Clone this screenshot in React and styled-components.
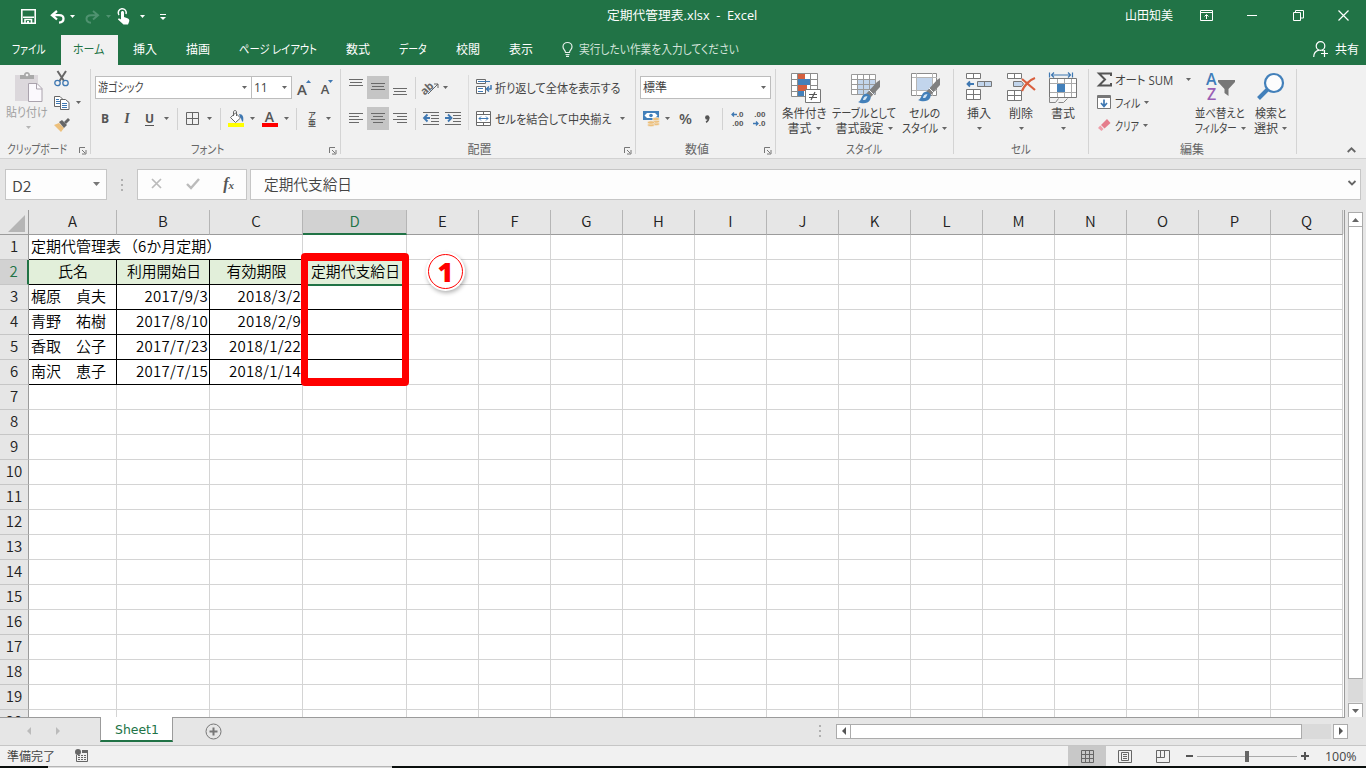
import { useLayoutEffect, useRef } from 'react';
import styled, { createGlobalStyle } from 'styled-components';

const COLUMNS = [
  { name: 'A', width: 88 },
  { name: 'B', width: 93 },
  { name: 'C', width: 93 },
  { name: 'D', width: 104 },
  ...'EFGHIJKLMNOPQ'.split('').map((name) => ({ name, width: 72 })),
];

const TEMPLATE = `29px ${COLUMNS.map((c) => `${c.width}px`).join(' ')} 1px`;

const HEADERS = [
  { text: '氏名', w: 30 },
  { text: '利用開始日', w: 74 },
  { text: '有効期限', w: 60 },
  { text: '定期代支給日', w: 89 },
];

const PEOPLE = [
  ['梶原　貞夫', '2017/9/3', '2018/3/2'],
  ['青野　祐樹', '2017/8/10', '2018/2/9'],
  ['香取　公子', '2017/7/23', '2018/1/22'],
  ['南沢　恵子', '2017/7/15', '2018/1/14'],
];

const TABS = [
  { text: 'ファイル', w: 34, ml: 12 },
  { text: 'ホーム', w: 31, ml: 15, active: true },
  { text: '挿入', w: 24, ml: 15 },
  { text: '描画', w: 24, ml: 29 },
  { text: 'ページ レイアウト', w: 78, ml: 29 },
  { text: '数式', w: 24, ml: 29 },
  { text: 'データ', w: 28, ml: 29 },
  { text: '校閲', w: 24, ml: 29 },
  { text: '表示', w: 24, ml: 29 },
];

// Squeezes a label to the width of its slot, like the condensed UI kana
function Fit({ w, children }) {
  const ref = useRef(null);

  useLayoutEffect(() => {
    const el = ref.current;
    el.style.transform = `scaleX(${w / el.offsetWidth})`;
  }, [w, children]);

  return (
    <FitBox $w={w}>
      <FitText ref={ref}>{children}</FitText>
    </FitBox>
  );
}

function Icon({ w, h, children, ...rest }) {
  return (
    <Svg width={w} height={h} viewBox={`0 0 ${w} ${h}`} fill="none" {...rest}>
      {children}
    </Svg>
  );
}

function Caret({ color = '#666' }) {
  return (
    <Icon w={5} h={3}>
      <path d="M0 0h5L2.5 3z" fill={color} />
    </Icon>
  );
}

function Lines({ rows }) {
  return (
    <Icon w={14} h={19} shapeRendering="crispEdges">
      {rows.map(([x, y, w]) => (
        <path key={y} d={`M${x} ${y + 0.5}h${w}`} stroke="#6a6a6a" />
      ))}
    </Icon>
  );
}

function Launcher() {
  return (
    <LauncherBox>
      <Icon w={8} h={8}>
        <path d="M.5 6V.5H6M3 3l3 3M7 3v4H3" stroke="#777" />
      </Icon>
    </LauncherBox>
  );
}

function Group({ width, label, labelWidth, launcher, children }) {
  return (
    <GroupBox $w={width}>
      <GroupBody>{children}</GroupBody>
      <GroupLabel $launcher={launcher}>
        <Fit w={labelWidth}>{label}</Fit>
        {launcher && <Launcher />}
      </GroupLabel>
    </GroupBox>
  );
}

function BigButton({ width, icon, first, second }) {
  return (
    <Big $w={width}>
      <BigIcon>{icon}</BigIcon>
      <BigLine><Fit w={first.w}>{first.text}</Fit></BigLine>
      <BigLine>
        {second && <Fit w={second.w}>{second.text}</Fit>}
        <Caret />
      </BigLine>
    </Big>
  );
}

function Brush({ x, y }) {
  return (
    <g transform={`translate(${x} ${y})`}>
      <path d="M21-1v7L11 17l-4-4L18 1z" fill="#808080" />
      <path d="M10 9l5 5" stroke="#f1f1f1" />
      <path d="M-1 21c4-1 3-7 7-8s7 3 5 6c-2 4-8 4-12 2z" fill="#4380ba" />
      <path d="M4 19c0-2 2-4.500 4.500-3.500-1 1-1 4-4.500 3.500z" fill="#d5e5f4" />
    </g>
  );
}

function TitleBar() {
  return (
    <Title>
      <Save>
        <Icon w={15} h={15}>
          <path d="M.8.8h13.4v13.4H.8z" stroke="#fff" strokeWidth="1.6" />
          <path d="M2 8.2h11M4 14v-3.5h6.5V14" stroke="#fff" strokeWidth="1.6" />
          <path d="M6 12h2v2H6z" fill="#fff" />
        </Icon>
      </Save>
      <Icon w={15} h={14}>
        <path d="M7 1L2 5.2 7 9.5M2.5 5.2H9c6 0 6 7 0 7.5" stroke="#fff" strokeWidth="2.3" />
      </Icon>
      <Slot $w={15}><Caret color="#fff" /></Slot>
      <Slot $w={24}>
        <Icon w={15} h={14}>
          <path d="M8 1l5 4.2L8 9.5M12.5 5.2H6c-6 0-6 7 0 7.5" stroke="#4f9270" strokeWidth="2" />
        </Icon>
      </Slot>
      <Slot $w={9}><Caret color="#4f9270" /></Slot>
      <Slot $w={22}>
        <Icon w={14} h={17}>
          <path d="M2 7a4 4 0 1 1 7-1" stroke="#fff" strokeWidth="1.5" />
          <path d="M4 4.5c0-2 3-2 3 0V9l4 1.5c1.5.7 1.5 2 1 3.5L11 16.5H6.5L1 11.5c0-1.2 1.5-1.5 3 0z" fill="#fff" />
        </Icon>
      </Slot>
      <Slot $w={14}><Caret color="#fff" /></Slot>
      <Slot $w={28}>
        <Icon w={6} h={6}>
          <path d="M0 .5h6" stroke="#fff" />
          <path d="M0 3h6L3 6z" fill="#fff" />
        </Icon>
      </Slot>
      <FileName><Fit w={150}>定期代管理表.xlsx&nbsp; - &nbsp;Excel</Fit></FileName>
      <UserName><Fit w={48}>山田知美</Fit></UserName>
      <WindowButton $w={46}>
        <Icon w={13} h={11}>
          <path d="M.5.5h12v10H.5zM.5 2.5h12M6.5 9V5M4.500 6.500l2-2 2 2" stroke="#fff" />
        </Icon>
      </WindowButton>
      <WindowButton $w={46}>
        <Icon w={11} h={11}><path d="M0 5.5h10" stroke="#fff" /></Icon>
      </WindowButton>
      <WindowButton $w={46}>
        <Icon w={11} h={11}>
          <path d="M.5 2.5h7v8h-7zM2.5 2V.5h8v7.5H8" stroke="#fff" />
        </Icon>
      </WindowButton>
      <WindowButton $w={46}>
        <Icon w={11} h={11}><path d="M.5.5l10 10M10.5.5l-10 10" stroke="#fff" strokeWidth="1.2" /></Icon>
      </WindowButton>
    </Title>
  );
}

function TabBar() {
  return (
    <Tabs>
      {TABS.map((tab) => (
        <Tab key={tab.text} $ml={tab.ml} $active={tab.active}>
          <Fit w={tab.w}>{tab.text}</Fit>
        </Tab>
      ))}
      <TellMe>
        <Icon w={11} h={15}>
          <path d="M3.5 10.5C3.5 8 1 7.5 1 4.8a4.5 4.3 0 0 1 9 0c0 2.7-2.5 3.2-2.5 5.7zM3.5 12.5h4M4 14.3h3" stroke="#e6f0ea" strokeWidth="1.2" />
        </Icon>
        <Fit w={160}>実行したい作業を入力してください</Fit>
      </TellMe>
      <Share>
        <Icon w={16} h={16}>
          <circle cx="7.5" cy="5" r="4.3" stroke="#fff" strokeWidth="1.2" />
          <path d="M.7 16c0-3 2-6 5.3-6.800M9 9l1.5 1M8 12.5h7M11.5 9v7" stroke="#fff" strokeWidth="1.2" />
        </Icon>
        <Fit w={24}>共有</Fit>
      </Share>
    </Tabs>
  );
}

function ClipboardGroup() {
  return (
    <Group width={91} label="クリップボード" labelWidth={60} launcher>
      <PasteButton>
        <Icon w={29} h={32}>
          <path d="M1 3h23v26H1z" fill="#dcd8dc" />
          <path d="M6 3h4c0-4 6-4 6 0h4v4H6z" fill="#a9a9a9" />
          <circle cx="13" cy="3" r="1.3" fill="#f1f1f1" />
          <path d="M14.5 11.5h8.500l5 5v13H14.5z" fill="#fbf9fd" stroke="#aaa3ad" />
          <path d="M22.5 11.5V17H28" stroke="#aaa3ad" />
        </Icon>
        <PasteLabel><Fit w={42}>貼り付け</Fit></PasteLabel>
        <Caret color="#b5b5b5" />
      </PasteButton>
      <ClipTools>
        <Icon w={15} h={16}>
          <path d="M3.500 0l6.500 10M12 0L5.500 10" stroke="#666" strokeWidth="2" />
          <circle cx="3.5" cy="12" r="2.7" stroke="#3f78b2" strokeWidth="1.3" />
          <circle cx="11.5" cy="12" r="2.7" stroke="#3f78b2" strokeWidth="1.3" />
        </Icon>
        <CopyRow>
          <Icon w={16} h={14}>
            <path d="M.5.5H6l2.5 2.5v7.5h-8z" fill="#fff" stroke="#666" />
            <path d="M2 3.5h3M2 5.5h4M2 7.5h4" stroke="#3f78b2" />
            <path d="M6.5 3.5h5l3.5 3v7H6.5z" fill="#fff" stroke="#666" />
            <path d="M8 7.5h5M8 9.5h5M8 11.5h5" stroke="#3f78b2" />
          </Icon>
          <Caret />
        </CopyRow>
        <Icon w={17} h={14}>
          <path d="M0 7l5-2 5 5-3 4z" fill="#edc07c" />
          <path d="M5 4l3-2 5 5-3 3z" fill="#666" />
          <path d="M10 4l4-4 2 2-4 4z" fill="#666" />
        </Icon>
      </ClipTools>
    </Group>
  );
}

function FontGroup() {
  return (
    <Group width={250} label="フォント" labelWidth={33} launcher>
      <Stack $pl={4}>
        <Row>
          <Combo $w={157}><Fit w={46}>游ゴシック</Fit><Caret /></Combo>
          <Combo $w={41} $joined><Fit w={14}>11</Fit><Caret /></Combo>
          <Slot $w={24}>
            <Grow $size={15} $top={3}>A</Grow>
            <Icon w={5} h={3}><path d="M0 3h5L2.5 0z" fill="#3f78b2" /></Icon>
          </Slot>
          <Slot $w={22}>
            <Grow $size={13} $top={4}>A</Grow>
            <Icon w={5} h={3}><path d="M0 0h5L2.5 3z" fill="#3f78b2" /></Icon>
          </Slot>
        </Row>
        <Row>
          <Slot $w={20}><Letter>B</Letter></Slot>
          <Slot $w={24}><Letter $italic>I</Letter></Slot>
          <Slot $w={21}><Letter $under>U</Letter></Slot>
          <Slot $w={12}><Caret /></Slot>
          <Slot $w={10}><Rule /></Slot>
          <Slot $w={21}>
            <Icon w={13} h={13}>
              <path d="M.5.5h12v12H.5zM6.5 0v13M0 6.5h13" stroke="#666" />
            </Icon>
          </Slot>
          <Slot $w={13}><Caret /></Slot>
          <Slot $w={9}><Rule /></Slot>
          <Slot $w={23}>
            <Icon w={17} h={17}>
              <path d="M2.500 7.500l5-4.500 5 5-5 4.500z" fill="#fff" stroke="#666" />
              <path d="M5.500 6V2c0-2 3-2 3 0v4" stroke="#666" />
              <path d="M11 4c4 0 5 3 4 8-2-1-1-3-3-5z" fill="#3f78b2" />
              <path d="M0 13h16v4H0z" fill="#ff0" />
            </Icon>
          </Slot>
          <Slot $w={9}><Caret /></Slot>
          <Slot $w={25}><FontColor>A</FontColor></Slot>
          <Slot $w={8}><Caret /></Slot>
          <Slot $w={13}><Rule /></Slot>
          <Slot $w={18}><Ruby><span>ア</span><span>亜</span></Ruby></Slot>
          <Slot $w={15}><Caret /></Slot>
        </Row>
      </Stack>
    </Group>
  );
}

function AlignGroup() {
  return (
    <Group width={295} label="配置" labelWidth={24} launcher>
      <Stack $pl={4}>
        <Row>
          <Slot $w={22}><Lines rows={[[0, 1, 14], [1, 4, 12], [0, 7, 14]]} /></Slot>
          <Slot $w={22} $on><Lines rows={[[0, 5, 14], [1, 8, 12], [0, 11, 14]]} /></Slot>
          <Slot $w={22}><Lines rows={[[0, 10, 14], [1, 13, 12], [0, 16, 14]]} /></Slot>
          <Slot $w={9}><Rule /></Slot>
          <Slot $w={22}>
            <Icon w={17} h={15}>
              <text x="-2" y="11" fontSize="11" fontWeight="bold" fontFamily="Open Sans" fill="#666" transform="rotate(-42 6 9)">ab</text>
              <path d="M5 14L15 4M15 8V4h-4" stroke="#666" />
            </Icon>
          </Slot>
          <Slot $w={7}><Caret /></Slot>
        </Row>
        <Row>
          <Slot $w={22}><Lines rows={[[0, 4, 14], [0, 7, 10], [0, 10, 14], [0, 13, 10]]} /></Slot>
          <Slot $w={22} $on><Lines rows={[[0, 4, 14], [2, 7, 10], [0, 10, 14], [2, 13, 10]]} /></Slot>
          <Slot $w={22}><Lines rows={[[0, 4, 14], [4, 7, 10], [0, 10, 14], [4, 13, 10]]} /></Slot>
          <Slot $w={9}><Rule /></Slot>
          <Slot $w={22}>
            <Icon w={16} h={13}>
              <path d="M0 .5h16M8 3.500h8M8 6.500h8M8 9.500h8M0 12.500h16" stroke="#6a6a6a" />
              <path d="M7 6H2" stroke="#3f78b2" strokeWidth="2" />
              <path d="M4.500 2.500L1 6l3.500 3.500" stroke="#3f78b2" strokeWidth="1.800" />
            </Icon>
          </Slot>
          <Slot $w={22}>
            <Icon w={16} h={13}>
              <path d="M0 .5h16M8 3.500h8M8 6.500h8M8 9.500h8M0 12.500h16" stroke="#6a6a6a" />
              <path d="M0 6h5" stroke="#3f78b2" strokeWidth="2" />
              <path d="M3 2.500L6.500 6 3 9.500" stroke="#3f78b2" strokeWidth="1.800" />
            </Icon>
          </Slot>
        </Row>
      </Stack>
      <TallRule />
      <Stack $pl={7}>
        <Row>
          <Icon w={16} h={17}>
            <path d="M.5.5h9v4h-9zM.5 7.5h9v7h-9z" fill="#fff" stroke="#6a6a6a" />
            <path d="M2 2.5h12M2 9.5h5M2 12.5h5" stroke="#3f78b2" />
            <path d="M15 6v4h-4M13 7.500L10.500 10l2.500 2.500" stroke="#3f78b2" strokeWidth="1.5" />
          </Icon>
          <ToolText><Fit w={126}>折り返して全体を表示する</Fit></ToolText>
        </Row>
        <Row>
          <Icon w={16} h={15}>
            <path d="M.5.5h14v14H.5zM0 3.5h15M0 11.5h15M7.5 0v3M7.5 12v3" fill="#fff" stroke="#6a6a6a" />
            <path d="M3 7.5h9M5 5.500l-2 2 2 2M10 5.500l2 2-2 2" stroke="#3f78b2" />
          </Icon>
          <ToolText><Fit w={116}>セルを結合して中央揃え</Fit></ToolText>
          <Slot $w={23}><Caret /></Slot>
        </Row>
      </Stack>
    </Group>
  );
}

function NumberGroup() {
  return (
    <Group width={140} label="数値" labelWidth={24} launcher>
      <Stack $pl={4}>
        <Row>
          <Combo $w={131}><Fit w={24}>標準</Fit><Caret /></Combo>
        </Row>
        <Row>
          <Slot $w={22}>
            <Icon w={17} h={16}>
              <path d="M0 0h16v9H0z" fill="#4380ba" />
              <path d="M1.5 4.500L4 2h8l2.500 2.500L12 7H4z" fill="#fff" />
              <circle cx="8" cy="4.500" r="1.800" fill="#4380ba" />
              <g fill="#edc07c" stroke="#f1f1f1" strokeWidth=".6">
                <ellipse cx="13" cy="13" rx="3.5" ry="1.7" />
                <ellipse cx="13" cy="10.5" rx="3.5" ry="1.7" />
                <ellipse cx="13" cy="8" rx="3.5" ry="1.7" />
                <ellipse cx="8" cy="14" rx="3.5" ry="1.7" />
                <ellipse cx="8" cy="11.5" rx="3.5" ry="1.7" />
              </g>
            </Icon>
          </Slot>
          <Slot $w={11}><Caret /></Slot>
          <Slot $w={25}><Percent>%</Percent></Slot>
          <Slot $w={18}>
            <Icon w={5} h={8}>
              <circle cx="2.3" cy="2.5" r="2.2" fill="#555" />
              <path d="M3.700 2.500C3.700 5 2.500 6.500 1 7.200" stroke="#555" strokeWidth="1.6" />
            </Icon>
          </Slot>
          <Slot $w={13}><Rule /></Slot>
          <Slot $w={16}>
            <Decimals>
              <DecimalLine>
                <Icon w={6} h={5}><path d="M6 2.500H1M3 .5l-2 2 2 2" stroke="#3f78b2" strokeWidth="1.300" /></Icon>
                .0
              </DecimalLine>
              <DecimalLine>.00</DecimalLine>
            </Decimals>
          </Slot>
          <Slot $w={28}>
            <Decimals>
              <DecimalLine>.00</DecimalLine>
              <DecimalLine>
                <Icon w={6} h={5}><path d="M0 2.500h5M3 .5l2 2-2 2" stroke="#3f78b2" strokeWidth="1.300" /></Icon>
                .0
              </DecimalLine>
            </Decimals>
          </Slot>
        </Row>
      </Stack>
    </Group>
  );
}

function StyleGroup() {
  return (
    <Group width={178} label="スタイル" labelWidth={36}>
      <Buttons>
        <BigButton
          width={48}
          first={{ text: '条件付き', w: 45 }}
          second={{ text: '書式', w: 24 }}
          icon={
            <Icon w={29} h={31}>
              <path d="M1.5 1.5h26v23h-26z" fill="#fff" />
              <path d="M8 1h7v6H8zM8 13h9v6H8z" fill="#d45f3f" />
              <path d="M8 7h12v6H8zM8 19h6v6H8z" fill="#4380ba" />
              <path d="M1.5 1.5h26v23h-26zM7.5 1v24M20.500 1v24M1 7.500h6M20 7.500h8M1 13.500h6M20 13.500h8M1 19.500h6M20 19.500h8" stroke="#8c8c8c" />
              <path d="M15.5 17.5h15v13h-15z" fill="#fff" stroke="#777" />
              <path d="M19 22.5h8M19 25.500h8M25 20l-4 8" stroke="#555" strokeWidth="1.2" />
            </Icon>
          }
        />
        <BigButton
          width={72}
          first={{ text: 'テーブルとして', w: 64 }}
          second={{ text: '書式設定', w: 48 }}
          icon={
            <Icon w={29} h={31}>
              <path d="M1.5 2.5h24v20h-24z" fill="#fff" />
              <path d="M8 8h18v14H8z" fill="#c2d5ec" />
              <path d="M1.5 2.5h24v20h-24zM7.5 2v20M13.5 2v20M19.5 2v20M1 7.5h25M1 12.5h25M1 17.5h25" stroke="#9a9a9a" />
              <Brush x={9} y={9} />
            </Icon>
          }
        />
        <BigButton
          width={48}
          first={{ text: 'セルの', w: 31 }}
          second={{ text: 'スタイル', w: 36 }}
          icon={
            <Icon w={27} h={31}>
              <path d="M.5 1.5h25v22H.5z" fill="#fff" stroke="#8c8c8c" />
              <path d="M5.5 1v23M21.5 1v23M1 5.5h25M1 18.5h25" stroke="#b5b5b5" />
              <path d="M6 6h15v12H6z" fill="#c2d5ec" />
              <Brush x={8} y={7} />
            </Icon>
          }
        />
      </Buttons>
    </Group>
  );
}

function CellGroup() {
  return (
    <Group width={135} label="セル" labelWidth={20}>
      <Buttons>
        <BigButton
          width={42}
          first={{ text: '挿入', w: 24 }}
          icon={
            <Icon w={28} h={30}>
              <path d="M1.5 1.5h14v5h-14zM8.5 1v5M1.5 17.500h14v10h-14zM8.5 17v10M1 22.5h15" fill="#fff" stroke="#777" />
              <path d="M12.500 9.500h14v5h-14zM19.500 9v5" fill="#c2d5ec" stroke="#777" />
              <path d="M9 12H3M5 9.500L2.500 12 5 14.500" stroke="#3f78b2" strokeWidth="1.8" />
            </Icon>
          }
        />
        <BigButton
          width={42}
          first={{ text: '削除', w: 24 }}
          icon={
            <Icon w={29} h={30}>
              <path d="M.5 1.5h14v5H.5zM7.5 1v5M.5 18.5h14v10H.5zM7.5 18v10M0 23.5h15" fill="#fff" stroke="#777" />
              <path d="M6.500 9.500h8l2 2.500-2 2.500h-8z" fill="#c2d5ec" stroke="#777" />
              <path d="M15 7l13 11M28 6C22 8 17 14 15 19" stroke="#d95f3e" strokeWidth="2.200" />
            </Icon>
          }
        />
        <BigButton
          width={42}
          first={{ text: '書式', w: 24 }}
          icon={
            <Icon w={29} h={32}>
              <path d="M.5.5v5M23.5.5v5M2 3h20M5 .5L2.500 3 5 5.500M19 .5L21.500 3 19 5.500" stroke="#3f78b2" strokeWidth="1.2" />
              <path d="M.5 6.500h27v19H.5z" fill="#fff" stroke="#777" />
              <path d="M8.500 7v18M15.500 7v18M22.500 7v18M1 11.500h26M1 20.500h26" stroke="#aaa" />
              <path d="M8 12h8v8H8z" fill="#4380ba" />
              <path d="M.5 26v4.500h6l3-4M9.500 30.500h5l4-4" stroke="#888" />
            </Icon>
          }
        />
      </Buttons>
    </Group>
  );
}

function EditGroup() {
  return (
    <Group width={208} label="編集" labelWidth={24}>
      <EditTools>
        <EditRow>
          <Icon w={15} h={15}>
            <path d="M14 4V1.500H2L8 7.500 2 13.500h12V11" stroke="#555" strokeWidth="2" />
          </Icon>
          <Fit w={58}>オート SUM</Fit>
          <Spacer $w={1} />
          <Caret />
        </EditRow>
        <EditRow>
          <Icon w={15} h={15}>
            <path d="M.5.5h13v13H.5z" fill="#fff" stroke="#777" />
            <path d="M1 2h12" stroke="#777" strokeWidth="2" />
            <path d="M7 4.500v7M4 8l3 3.500L10 8" stroke="#3f78b2" strokeWidth="1.7" />
          </Icon>
          <Fit w={25}>フィル</Fit>
          <Caret />
        </EditRow>
        <EditRow>
          <Icon w={15} h={15}>
            <path d="M4 7l6-6 3.500 4-6 5.500z" fill="#e57d8c" />
            <path d="M3.300 7.500L1 10l3.500 3 2-2z" fill="#ef9faa" />
          </Icon>
          <Fit w={24}>クリア</Fit>
          <Caret />
        </EditRow>
      </EditTools>
      <BigButton
        width={54}
        first={{ text: '並べ替えと', w: 50 }}
        second={{ text: 'フィルター', w: 42 }}
        icon={
          <Icon w={28} h={31}>
            <text x="0" y="13" fontSize="16" fontWeight="600" fontFamily="Open Sans" fill="#3f7dba">A</text>
            <text x="1" y="28" fontSize="16" fontWeight="600" fontFamily="Open Sans" fill="#9a5fb5">Z</text>
            <path d="M12 8h17v2l-6.500 7v7l-4-3v-4L12 10z" fill="#777" />
          </Icon>
        }
      />
      <BigButton
        width={47}
        first={{ text: '検索と', w: 32 }}
        second={{ text: '選択', w: 24 }}
        icon={
          <Icon w={29} h={30}>
            <circle cx="18" cy="11" r="9" fill="#fdfdfd" stroke="#4380ba" strokeWidth="2.2" />
            <path d="M11.500 17.500L2.500 26.500" stroke="#4380ba" strokeWidth="4" />
          </Icon>
        }
      />
    </Group>
  );
}

function FormulaBar() {
  return (
    <Formula>
      <NameBox>
        <Fit w={19}>D2</Fit>
        <Icon w={7} h={4}><path d="M0 0h7L3.500 4z" fill="#777" /></Icon>
      </NameBox>
      <Grip><i /><i /><i /></Grip>
      <FormulaButtons>
        <Icon w={11} h={11}><path d="M1 1l9 9M10 1l-9 9" stroke="#bbb" strokeWidth="1.7" /></Icon>
        <Icon w={14} h={11}><path d="M1 6l4 4 8-9" stroke="#bbb" strokeWidth="2.4" /></Icon>
        <Fx>f<small>x</small></Fx>
      </FormulaButtons>
      <FormulaInput>
        <Fit w={88}>定期代支給日</Fit>
        <Icon w={8} h={6}><path d="M.5 1L4 4.500 7.500 1" stroke="#666" strokeWidth="1.8" /></Icon>
      </FormulaInput>
    </Formula>
  );
}

function HeaderCells() {
  return HEADERS.map((h) => (
    <Cell key={h.text} $center $fill $black>
      <Fit w={h.w}>{h.text}</Fit>
    </Cell>
  ));
}

function PersonCells({ person }) {
  return (
    <>
      <Cell $black><Fit w={75}>{person[0]}</Fit></Cell>
      <Cell $black $right>{person[1]}</Cell>
      <Cell $black $right>{person[2]}</Cell>
      <Cell $black />
    </>
  );
}

function EmptyCells({ from }) {
  return COLUMNS.slice(from).map((c) => <Cell key={c.name} />);
}

function SheetRow({ number }) {
  const person = PEOPLE[number - 3];

  return (
    <SheetLine>
      <RowHead $active={number === 2}>{number}</RowHead>
      {number === 1 && (
        <>
          <Cell $span={3} $bottom>
            <Fit w={90}>定期代管理表</Fit>
            <Spacer $w={2} />
            <Fit w={98}>（6か月定期）</Fit>
          </Cell>
          <EmptyCells from={3} />
        </>
      )}
      {number === 2 && <HeaderCells />}
      {person && <PersonCells person={person} />}
      {number > 1 && <EmptyCells from={number < 7 ? 4 : 0} />}
    </SheetLine>
  );
}

function Sheet() {
  return (
    <Workspace>
      <SheetArea>
        <SheetLine>
          <Corner>
            <Icon w={17} h={17}><path d="M17 0v17H0z" fill="#b5b5b5" /></Icon>
          </Corner>
          {COLUMNS.map((c) => (
            <ColHead key={c.name} $active={c.name === 'D'}>{c.name}</ColHead>
          ))}
        </SheetLine>
        {Array.from({ length: 20 }, (_, i) => <SheetRow key={i} number={i + 1} />)}
        <Selection />
        <RedFrame />
        <Badge><span>1</span></Badge>
      </SheetArea>
      <VScroll>
        <ScrollButton>
          <Icon w={7} h={4}><path d="M0 4h7L3.500 0z" fill="#666" /></Icon>
        </ScrollButton>
        <VThumb />
        <VTrack />
        <ScrollButton>
          <Icon w={7} h={4}><path d="M0 0h7L3.500 4z" fill="#666" /></Icon>
        </ScrollButton>
      </VScroll>
    </Workspace>
  );
}

function SheetTabs() {
  return (
    <SheetBar>
      <TabArrows>
        <Icon w={4} h={8}><path d="M4 0v8L0 4z" fill="#bbb" /></Icon>
        <Icon w={4} h={8}><path d="M0 0v8l4-4z" fill="#bbb" /></Icon>
      </TabArrows>
      <SheetTab><Fit w={44}>Sheet1</Fit></SheetTab>
      <AddSheet>
        <Icon w={17} h={17}>
          <circle cx="8.5" cy="8.5" r="7.5" stroke="#777" />
          <path d="M8.5 4.500v8M4.500 8.500h8" stroke="#777" strokeWidth="2" />
        </Icon>
      </AddSheet>
      <TabGrip><i /><i /><i /></TabGrip>
      <HScroll>
        <ScrollButton>
          <Icon w={4} h={8}><path d="M4 0v8L0 4z" fill="#555" /></Icon>
        </ScrollButton>
        <HThumb />
        <HTrack />
        <ScrollButton>
          <Icon w={4} h={8}><path d="M0 0v8l4-4z" fill="#555" /></Icon>
        </ScrollButton>
      </HScroll>
    </SheetBar>
  );
}

function StatusBar() {
  return (
    <Status>
      <Fit w={48}>準備完了</Fit>
      <MacroIcon>
        <Icon w={13} h={13}>
          <path d="M1.500 6v6.500h11V1.500H7" stroke="#666" />
          <path d="M7 1h6v3H7z" fill="#666" />
          <circle cx="3" cy="3" r="3" fill="#666" />
          <path d="M3 6.500h9M3 8.500h9M3 10.500h9" stroke="#666" strokeDasharray="2 1" />
        </Icon>
      </MacroIcon>
      <View $on>
        <Icon w={13} h={13}>
          <path d="M.5.5h12v12H.5zM4.5 0v13M8.5 0v13M0 4.5h13M0 8.5h13" stroke="#666" />
        </Icon>
      </View>
      <View>
        <Icon w={14} h={13}>
          <path d="M.5.5h13v12H.5zM3.5 2.5h7v8h-7zM5 4.5h4M5 6.5h4M5 8.5h4" stroke="#666" />
        </Icon>
      </View>
      <View>
        <Icon w={14} h={13}>
          <path d="M.5.5h13v12H.5zM.5 7.5h8M4.5 0v7.500M8.500 0v7.500" stroke="#666" />
        </Icon>
      </View>
      <Zoom>
        <Icon w={7} h={2}><path d="M0 1h7" stroke="#555" strokeWidth="2" /></Icon>
        <ZoomTrack><ZoomKnob /></ZoomTrack>
        <Icon w={8} h={8}><path d="M0 4h8M4 0v8" stroke="#555" strokeWidth="2" /></Icon>
      </Zoom>
      <Fit w={32}>100%</Fit>
    </Status>
  );
}

export default function App() {
  return (
    <Window>
      <GlobalStyle />
      <TitleBar />
      <TabBar />
      <Ribbon>
        <ClipboardGroup />
        <FontGroup />
        <AlignGroup />
        <NumberGroup />
        <StyleGroup />
        <CellGroup />
        <EditGroup />
        <Collapse>
          <Icon w={9} h={6}><path d="M.7 5L4.5 1.300 8.300 5" stroke="#666" strokeWidth="1.8" /></Icon>
        </Collapse>
      </Ribbon>
      <FormulaBar />
      <Sheet />
      <SheetTabs />
      <StatusBar />
      <Taskbar><i /><b /></Taskbar>
    </Window>
  );
}

const GlobalStyle = createGlobalStyle`
  * {
    box-sizing: border-box;
  }
  body {
    margin: 0;
    overflow: hidden;
  }
`;

const Window = styled.div`
  width: 1366px;
  height: 768px;
  display: flex;
  flex-direction: column;
  overflow: hidden;
  background-color: #e6e6e6;
  color: #444;
  font-family: 'Open Sans', 'Noto Sans CJK JP', sans-serif;
  font-size: 12px;
  font-feature-settings: 'palt';
`;

const Svg = styled.svg`
  display: block;
  flex: none;
  overflow: visible;
`;

const FitBox = styled.span`
  display: block;
  flex: none;
  width: ${(p) => p.$w}px;
  white-space: nowrap;
`;

const FitText = styled.span`
  display: inline-block;
  transform-origin: left center;
`;

const Spacer = styled.span`
  flex: none;
  width: ${(p) => p.$w}px;
`;

const Slot = styled.div`
  flex: none;
  width: ${(p) => p.$w}px;
  height: 100%;
  display: flex;
  align-items: center;
  justify-content: center;
  background-color: ${(p) => (p.$on ? '#c5c5c5' : 'transparent')};
`;

const Title = styled.header`
  height: 35px;
  flex: none;
  display: flex;
  align-items: center;
  padding-bottom: 2px;
  background-color: #217346;
  color: #fff;
`;

const Save = styled.div`
  width: 50px;
  padding-left: 21px;
`;

const FileName = styled.div`
  margin-left: 430px;
  margin-bottom: 3px;
`;

const UserName = styled.div`
  margin-left: auto;
  margin-right: 10px;
  margin-bottom: 3px;
`;

const WindowButton = styled(Slot)`
  height: 30px;
  align-self: flex-start;
  &:last-child {
    width: 45px;
  }
`;

const Tabs = styled.nav`
  height: 30px;
  flex: none;
  display: flex;
  background-color: #217346;
  color: #fff;
`;

const Tab = styled.div`
  display: flex;
  align-items: center;
  margin-left: ${(p) => p.$ml}px;
  padding: 0 ${(p) => (p.$active ? '14px 2px 12px' : '0 2px')};
  background-color: ${(p) => (p.$active ? '#f1f1f1' : 'transparent')};
  color: ${(p) => (p.$active ? '#217346' : '#fff')};
`;

const TellMe = styled.div`
  display: flex;
  align-items: center;
  gap: 6px;
  margin-left: 29px;
  padding-bottom: 2px;
  color: #d3e3da;
`;

const Share = styled.div`
  display: flex;
  align-items: center;
  gap: 6px;
  margin-left: auto;
  margin-right: 7px;
  padding-bottom: 2px;
`;

const Ribbon = styled.section`
  height: 94px;
  flex: none;
  display: flex;
  background-color: #f1f1f1;
  border-bottom: 1px solid #d2d2d2;
`;

const GroupBox = styled.div`
  flex: none;
  width: ${(p) => p.$w}px;
  display: flex;
  flex-direction: column;
  background: linear-gradient(#d4d4d4, #d4d4d4) right 4px / 1px 85px no-repeat;
`;

const GroupBody = styled.div`
  height: 75px;
  display: flex;
`;

const GroupLabel = styled.div`
  height: 18px;
  display: flex;
  align-items: center;
  justify-content: center;
  padding-right: ${(p) => (p.$launcher ? 18 : 2)}px;
  color: #666;
  position: relative;
`;

const LauncherBox = styled.div`
  position: absolute;
  right: 4px;
  top: 7px;
`;

const Stack = styled.div`
  display: flex;
  flex-direction: column;
  gap: 8px;
  padding: 11px 0 0 ${(p) => p.$pl}px;
`;

const Row = styled.div`
  height: 23px;
  display: flex;
  align-items: center;
`;

const Rule = styled.div`
  width: 1px;
  height: 22px;
  background-color: #d2d2d2;
`;

const TallRule = styled.div`
  width: 1px;
  height: 55px;
  margin: 10px 0 0 4px;
  background-color: #dcdcdc;
`;

const Combo = styled.div`
  width: ${(p) => p.$w}px;
  height: 23px;
  display: flex;
  align-items: center;
  justify-content: space-between;
  padding: 0 4px 1px 2px;
  margin-left: ${(p) => (p.$joined ? '-1px' : '0')};
  background-color: #fff;
  border: 1px solid #bdbdbd;
`;

const Grow = styled.span`
  margin-top: ${(p) => p.$top}px;
  font-size: ${(p) => p.$size}px;
  font-weight: 600;
  color: #555;
  line-height: 1;
  & + svg {
    margin-top: -12px;
    margin-left: -1px;
  }
`;

const Letter = styled.span`
  font: ${(p) => (p.$italic ? "italic bold 14px 'Liberation Serif', serif" : "bold 12px 'Open Sans', sans-serif")};
  line-height: 13px;
  color: #555;
  border-bottom: ${(p) => (p.$under ? '1px solid #555' : '0')};
`;

const FontColor = styled.span`
  width: 16px;
  height: 16px;
  margin-top: 1px;
  line-height: 12px;
  text-align: center;
  font-size: 14px;
  font-weight: 600;
  color: #555;
  border-bottom: 4px solid #f00;
`;

const Ruby = styled.span`
  display: flex;
  flex-direction: column;
  align-items: center;
  font-size: 8px;
  font-weight: 500;
  line-height: 8px;
`;

const ToolText = styled.div`
  margin-left: 3px;
`;

const Percent = styled.span`
  margin-bottom: 2px;
  font-size: 15px;
  font-weight: 600;
  color: #555;
`;

const Decimals = styled.div`
  display: flex;
  flex-direction: column;
  align-items: flex-end;
`;

const DecimalLine = styled.span`
  display: flex;
  align-items: center;
  font: bold 8px 'Liberation Sans', sans-serif;
  line-height: 9px;
  color: #555;
`;

const PasteButton = styled.div`
  width: 50px;
  padding: 7px 0 0 6px;
  display: flex;
  flex-direction: column;
  align-items: center;
  color: #a0a0a0;
`;

const PasteLabel = styled.div`
  height: 17px;
  margin-top: 1px;
  margin-bottom: 4px;
  margin-right: 3px;
  line-height: 16px;
`;

const ClipTools = styled.div`
  display: flex;
  flex-direction: column;
  justify-content: space-between;
  padding: 6px 0 8px 4px;
`;

const CopyRow = styled.div`
  display: flex;
  align-items: center;
  gap: 6px;
`;

const Buttons = styled.div`
  display: flex;
  padding-left: 4px;
`;

const Big = styled.div`
  width: ${(p) => p.$w}px;
  flex: none;
  padding-top: 7px;
`;

const BigIcon = styled.div`
  height: 34px;
  display: flex;
  justify-content: center;
`;

const BigLine = styled.div`
  height: 15px;
  line-height: 15px;
  display: flex;
  align-items: center;
  justify-content: center;
  gap: 4px;
`;

const EditTools = styled.div`
  width: 104px;
  padding: 3px 0 0 8px;
`;

const EditRow = styled.div`
  height: 23px;
  display: flex;
  align-items: center;
  gap: 4px;
  & > svg:first-child {
    margin-right: -1px;
  }
  & > svg + span + span {
    margin-right: 4px;
  }
`;

const Collapse = styled.div`
  margin: auto 10px 5px auto;
`;

const Formula = styled.section`
  height: 51px;
  flex: none;
  display: flex;
  padding: 10px 5px;
  color: #444;
`;

const Box = styled.div`
  height: 31px;
  display: flex;
  align-items: center;
  background-color: #fdfdfd;
  border: 1px solid #c6c6c6;
`;

const NameBox = styled(Box)`
  width: 102px;
  justify-content: space-between;
  padding: 2px 6px 0;
  font: 350 15px 'Noto Sans CJK JP', sans-serif;
  svg {
    margin-bottom: 4px;
  }
`;

const Grip = styled.div`
  width: 30px;
  display: flex;
  flex-direction: column;
  align-items: center;
  justify-content: center;
  gap: 3px;
  i {
    width: 2px;
    height: 2px;
    background-color: #b0b0b0;
  }
`;

const FormulaButtons = styled(Box)`
  width: 110px;
  justify-content: space-between;
  padding: 0 12px 2px 13px;
`;

const Fx = styled.span`
  font: italic bold 16px 'Liberation Serif', serif;
  color: #555;
  small {
    font-size: 11px;
  }
`;

const FormulaInput = styled(Box)`
  flex: 1;
  margin-left: 3px;
  justify-content: space-between;
  padding: 0 4px 3px 13px;
  font: 350 15px 'Noto Sans CJK JP', sans-serif;
`;

const Workspace = styled.main`
  height: 507px;
  flex: none;
  display: flex;
`;

const SheetArea = styled.div`
  position: relative;
  width: 1345px;
  height: 507px;
  overflow: hidden;
  background: linear-gradient(#e6e6e6, #e6e6e6) 0 0 / 100% 24px no-repeat #fff;
  border-right: 1px solid #9b9b9b;
  color: #000;
  font: 350 15px 'Noto Sans CJK JP', sans-serif;
  font-feature-settings: normal;
`;

const SheetLine = styled.div`
  height: 25px;
  display: grid;
  grid-template-columns: ${TEMPLATE};
`;

const Corner = styled.div`
  display: flex;
  padding: 5px 0 0 8px;
  border-right: 1px solid #9b9b9b;
  border-bottom: 1px solid #9b9b9b;
`;

const ColHead = styled.div`
  height: 25px;
  line-height: 21px;
  text-align: center;
  border-right: 1px solid #b5b5b5;
  border-bottom: ${(p) => (p.$active ? '2px solid #217346' : '1px solid #9b9b9b')};
  background-color: ${(p) => (p.$active ? '#d2d2d2' : '#e6e6e6')};
  color: ${(p) => (p.$active ? '#217346' : '#222')};
`;

const RowHead = styled.div`
  line-height: 22px;
  text-align: center;
  border-right: ${(p) => (p.$active ? '2px solid #217346' : '1px solid #9b9b9b')};
  border-bottom: 1px solid #c6c6c6;
  background-color: ${(p) => (p.$active ? '#d2d2d2' : '#e6e6e6')};
  color: ${(p) => (p.$active ? '#217346' : '#222')};
`;

const Cell = styled.div`
  display: flex;
  grid-column: span ${(p) => p.$span || 1};
  justify-content: ${(p) => (p.$center ? 'center' : p.$right ? 'flex-end' : 'flex-start')};
  line-height: 22px;
  letter-spacing: ${(p) => (p.$right ? '0.3px' : '0')};
  padding: 0 ${(p) => (p.$right ? 1 : 0)}px 0 ${(p) => (p.$center ? 1 : 2)}px;
  white-space: nowrap;
  background-color: ${(p) => (p.$fill ? '#e2efda' : '#fff')};
  border-right: 1px solid ${(p) => (p.$black ? '#000' : '#d4d4d4')};
  border-bottom: 1px solid ${(p) => (p.$black || p.$bottom ? '#000' : '#d4d4d4')};
`;

const Selection = styled.div`
  position: absolute;
  left: 302px;
  top: 49px;
  width: 106px;
  height: 27px;
  border: 2px solid #217346;
`;

const RedFrame = styled.div`
  position: absolute;
  left: 301px;
  top: 43px;
  width: 108px;
  height: 133px;
  border: 8px solid #f00;
  border-width: 8px 7px;
  border-radius: 4px;
`;

const Badge = styled.div`
  position: absolute;
  left: 426px;
  top: 42px;
  width: 39px;
  height: 39px;
  padding: 2px;
  border-radius: 50%;
  background-color: #fff;
  box-shadow: 1px 2px 4px rgba(0, 0, 0, 0.3);
  span {
    height: 35px;
    display: flex;
    align-items: center;
    justify-content: center;
    border: 1px solid #f00;
    border-radius: 50%;
    color: #f00;
    font: 800 27px 'Open Sans', sans-serif;
  }
`;

const VScroll = styled.div`
  width: 15px;
  height: 506px;
  margin: 2px 0 0 3px;
  display: flex;
  flex-direction: column;
`;

const ScrollButton = styled.div`
  width: 15px;
  height: 15px;
  flex: none;
  display: flex;
  align-items: center;
  justify-content: center;
  background-color: #fff;
  border: 1px solid #ababab;
`;

const VThumb = styled.div`
  height: 453px;
  margin-top: -1px;
  background-color: #fff;
  border: 1px solid #ababab;
`;

const VTrack = styled.div`
  flex: 1;
  margin-bottom: 1px;
  background-color: #dadada;
`;

const SheetBar = styled.div`
  height: 28px;
  flex: none;
  display: flex;
  align-items: center;
  background: linear-gradient(#9b9b9b, #9b9b9b) 0 0 / 1345px 1px no-repeat #e6e6e6;
`;

const TabArrows = styled.div`
  width: 100px;
  padding: 0 40px 1px 27px;
  display: flex;
  justify-content: space-between;
`;

const SheetTab = styled.div`
  width: 73px;
  height: 25px;
  align-self: flex-start;
  display: flex;
  justify-content: center;
  align-items: center;
  padding-top: 1px;
  background-color: #fff;
  border: 1px solid #9b9b9b;
  border-top: 0;
  border-bottom: 2px solid #217346;
  color: #217346;
  font: 13px 'DejaVu Sans', sans-serif;
`;

const AddSheet = styled.div`
  margin-left: 32px;
`;

const TabGrip = styled(Grip)`
  width: 4px;
  margin-left: 596px;
`;

const HScroll = styled.div`
  display: flex;
  margin-left: 14px;
`;

const HThumb = styled.div`
  width: 451px;
  background-color: #fff;
  border: 1px solid #ababab;
  border-left: 0;
`;

const HTrack = styled.div`
  width: 29px;
  margin-right: 2px;
  background-color: #dadada;
`;

const Status = styled.footer`
  height: 21px;
  flex: none;
  display: flex;
  align-items: center;
  padding-left: 7px;
  background-color: #f1f1f1;
  border-top: 1px solid #c6c6c6;
`;

const MacroIcon = styled.div`
  margin: 0 auto 2px 20px;
`;

const View = styled(Slot)`
  width: 38px;
  background-color: ${(p) => (p.$on ? '#c8c8c8' : 'transparent')};
`;

const Zoom = styled.div`
  display: flex;
  align-items: center;
  gap: 4px;
  margin: 0 16px 0 4px;
  & + span {
    margin-right: 9px;
  }
`;

const ZoomTrack = styled.div`
  width: 100px;
  height: 11px;
  display: flex;
  justify-content: center;
  background: linear-gradient(#aaa, #aaa) 0 5px / 100% 1px no-repeat;
`;

const ZoomKnob = styled.div`
  width: 4px;
  height: 11px;
  background-color: #666;
`;

const Taskbar = styled.div`
  height: 2px;
  display: flex;
  background-color: #0a0f0d;
  i {
    width: 48px;
  }
  b {
    width: 344px;
    background-color: #dedede;
    border-top: 1px solid #b5b5b5;
  }
`;
